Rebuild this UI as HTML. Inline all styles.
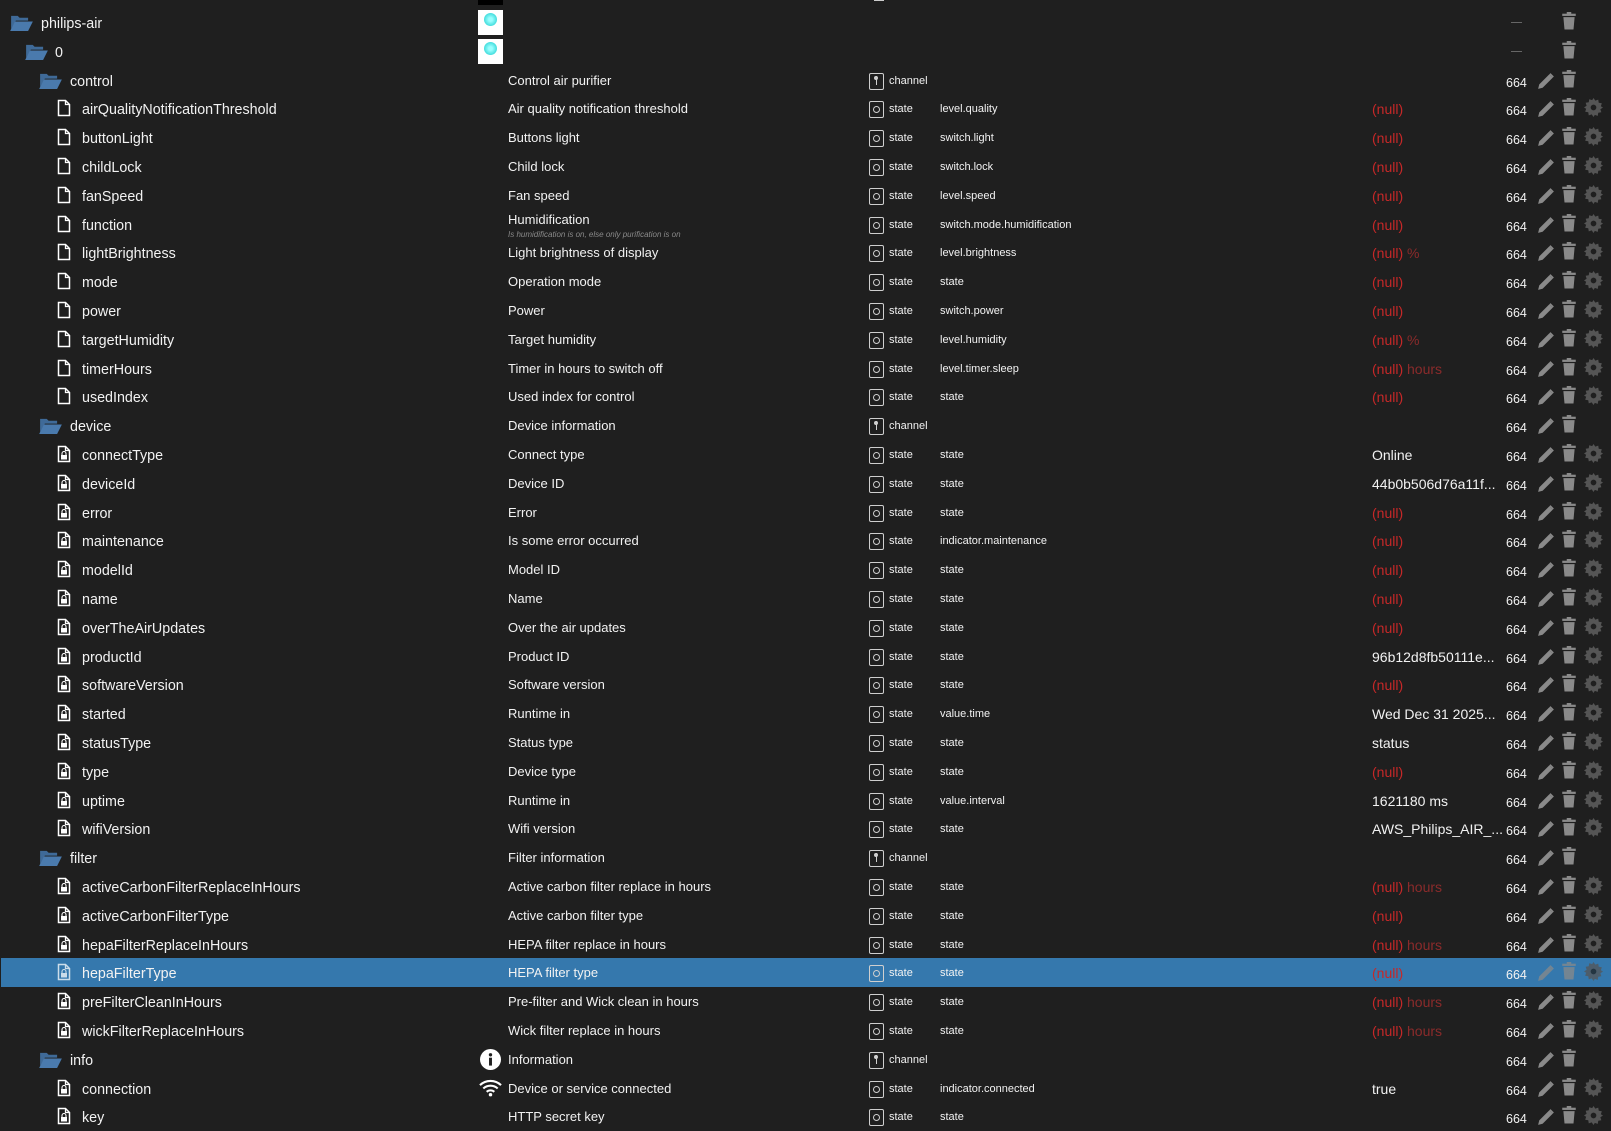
<!DOCTYPE html>
<html><head><meta charset="utf-8"><style>
html,body{margin:0;padding:0;background:#1f1f1f;width:1611px;height:1130px;overflow:hidden;font-family:"Liberation Sans",sans-serif;color:#f2f2f2}
.r{position:absolute;left:0;width:1611px;height:28.8px}
.r>*{position:absolute}
.sel{background:#3578ad;left:1px;width:1610px}
.n{font-size:14.3px;top:8px;white-space:nowrap}
.d{left:508px;font-size:13px;top:7px;white-space:nowrap}
.d2{left:508px;font-size:8px;top:20px;font-style:italic;color:#8a8a8a;white-space:nowrap}
.t{left:889px;font-size:11px;top:9px}
.ro{left:940px;font-size:11px;top:9px;white-space:nowrap}
.v{left:1372px;font-size:14px;top:7px;white-space:nowrap}
.nu{color:#c62828}.un{color:#8b2b2b}
.p{left:1506px;font-size:12.5px;top:10px}
.tb{left:869px;top:7px;width:13px;height:15px;border:1px solid #cfcfcf;border-radius:2px}
.tb.s::after{content:"";position:absolute;left:3px;top:4px;width:5px;height:5px;border:1px solid #cfcfcf;border-radius:50%}
.tb.c::after{content:"";position:absolute;left:6px;top:2px;width:1px;height:9px;background:#cfcfcf}
.tb.c::before{content:"";position:absolute;left:4px;top:2px;width:4px;height:4px;background:#cfcfcf;border-radius:50%}
.ic{position:absolute}
svg.ic[style*="left:1537px"],svg.ic[style*="left:1536px"]{width:18px;height:18px;margin-top:-1px}
svg.ic[style*="left:1563px"],svg.ic[style*="left:1562px"]{width:14px;height:18px;margin-left:-1px;margin-top:-1px}
svg.ic[style*="left:1584px"],svg.ic[style*="left:1583px"]{width:19px;height:19px;margin-top:-1px}
.sel svg.ic{opacity:.75}
</style></head><body>
<svg width="0" height="0" style="position:absolute">
<defs>
<symbol id="fo" viewBox="0 0 24 18"><path d="M1 2h7l2 2h9v3H6L1 16z" fill="#3f6a98"/><path d="M5 8h19l-5 10H0z" fill="#4a7aad"/></symbol>
<symbol id="fi" viewBox="0 0 14 18"><path d="M1.5 1.5h7l4 4v11h-11z" fill="none" stroke="#fff" stroke-width="1.5"/><path d="M8.5 1.5v4h4" fill="none" stroke="#fff" stroke-width="1.3"/></symbol>
<symbol id="fl" viewBox="0 0 14 18"><path d="M1.5 1.5h7l4 4v11h-11z" fill="none" stroke="#fff" stroke-width="1.5"/><path d="M8.5 1.5v4h4" fill="none" stroke="#fff" stroke-width="1.3"/><rect x="4" y="10" width="6" height="4.5" fill="#fff"/><path d="M5 10V8.5a2 2 0 0 1 4 0V10" fill="none" stroke="#fff" stroke-width="1.1"/></symbol>
<symbol id="pe" viewBox="0 0 16 16"><path d="M1 15l1-4 9-9 3 3-9 9z" fill="#8a8a8a"/><path d="M12 1l3 3-1 1-3-3z" fill="#8a8a8a"/></symbol>
<symbol id="tr" viewBox="0 0 12 16"><rect x="0" y="1.5" width="12" height="2" fill="#8a8a8a"/><rect x="4" y="0" width="4" height="2" fill="#8a8a8a"/><path d="M1 4.5h10l-1 11H2z" fill="#8a8a8a"/></symbol>
<symbol id="ge" viewBox="0 0 16 16"><path d="M8 0l1.5 2.2 2.5-.8.4 2.6 2.6.4-.8 2.5L16 8l-2.2 1.5.8 2.5-2.6.4-.4 2.6-2.5-.8L8 16l-1.5-2.2-2.5.8-.4-2.6-2.6-.4.8-2.5L0 8l2.2-1.5-.8-2.5 2.6-.4.4-2.6 2.5.8z" fill="#555"/><circle cx="8" cy="8" r="2.4" fill="#1f1f1f"/></symbol>
</defs></svg>
<div style="position:absolute;left:478px;top:0;width:25px;height:5px;background:#000"></div>
<div style="position:absolute;left:874px;top:0;width:10px;height:1px;background:#ccc"></div>

<div class="r" style="top:8px"><svg class="ic" style="left:10px;top:6px" width="23" height="17"><use href="#fo"/></svg><span class="n" style="left:41px">philips-air</span><div style="left:478px;top:2px;width:25px;height:25px;background:#fff"><div style="position:absolute;left:6px;top:3px;width:13px;height:13px;border-radius:50%;background:radial-gradient(#9ff 20%,#4dd 70%,#dff)"></div></div><div style="left:1511px;top:14px;width:11px;height:1px;background:#666"></div><svg class="ic" style="left:1563px;top:5px" width="12" height="16"><use href="#tr"/></svg></div>
<div class="r" style="top:36.8px"><svg class="ic" style="left:25px;top:6px" width="23" height="17"><use href="#fo"/></svg><span class="n" style="left:55px">0</span><div style="left:478px;top:2px;width:25px;height:25px;background:#fff"><div style="position:absolute;left:6px;top:3px;width:13px;height:13px;border-radius:50%;background:radial-gradient(#9ff 20%,#4dd 70%,#dff)"></div></div><div style="left:1511px;top:14px;width:11px;height:1px;background:#666"></div><svg class="ic" style="left:1563px;top:5px" width="12" height="16"><use href="#tr"/></svg></div>

<div class="r" style="top:65.6px"><svg class="ic" style="left:39px;top:6px" width="23" height="17"><use href="#fo"/></svg><span class="n" style="left:70px">control</span><span class="d">Control air purifier</span><i class="tb c"></i><span class="t">channel</span><span class="p">664</span><svg class="ic" style="left:1537px;top:7px" width="16" height="16"><use href="#pe"/></svg><svg class="ic" style="left:1563px;top:5px" width="12" height="16"><use href="#tr"/></svg></div>

<div class="r" style="top:94.4px"><svg class="ic" style="left:57px;top:5px" width="14" height="18"><use href="#fi"/></svg><span class="n" style="left:82px">airQualityNotificationThreshold</span><span class="d">Air quality notification threshold</span><i class="tb s"></i><span class="t">state</span><span class="ro">level.quality</span><span class="v nu">(null)</span><span class="p">664</span><svg class="ic" style="left:1537px;top:7px" width="16" height="16"><use href="#pe"/></svg><svg class="ic" style="left:1563px;top:5px" width="12" height="16"><use href="#tr"/></svg><svg class="ic" style="left:1584px;top:5px" width="16" height="16"><use href="#ge"/></svg></div>
<div class="r" style="top:123.2px"><svg class="ic" style="left:57px;top:5px" width="14" height="18"><use href="#fi"/></svg><span class="n" style="left:82px">buttonLight</span><span class="d">Buttons light</span><i class="tb s"></i><span class="t">state</span><span class="ro">switch.light</span><span class="v nu">(null)</span><span class="p">664</span><svg class="ic" style="left:1537px;top:7px" width="16" height="16"><use href="#pe"/></svg><svg class="ic" style="left:1563px;top:5px" width="12" height="16"><use href="#tr"/></svg><svg class="ic" style="left:1584px;top:5px" width="16" height="16"><use href="#ge"/></svg></div>
<div class="r" style="top:152px"><svg class="ic" style="left:57px;top:5px" width="14" height="18"><use href="#fi"/></svg><span class="n" style="left:82px">childLock</span><span class="d">Child lock</span><i class="tb s"></i><span class="t">state</span><span class="ro">switch.lock</span><span class="v nu">(null)</span><span class="p">664</span><svg class="ic" style="left:1537px;top:7px" width="16" height="16"><use href="#pe"/></svg><svg class="ic" style="left:1563px;top:5px" width="12" height="16"><use href="#tr"/></svg><svg class="ic" style="left:1584px;top:5px" width="16" height="16"><use href="#ge"/></svg></div>
<div class="r" style="top:180.8px"><svg class="ic" style="left:57px;top:5px" width="14" height="18"><use href="#fi"/></svg><span class="n" style="left:82px">fanSpeed</span><span class="d">Fan speed</span><i class="tb s"></i><span class="t">state</span><span class="ro">level.speed</span><span class="v nu">(null)</span><span class="p">664</span><svg class="ic" style="left:1537px;top:7px" width="16" height="16"><use href="#pe"/></svg><svg class="ic" style="left:1563px;top:5px" width="12" height="16"><use href="#tr"/></svg><svg class="ic" style="left:1584px;top:5px" width="16" height="16"><use href="#ge"/></svg></div>
<div class="r" style="top:209.6px"><svg class="ic" style="left:57px;top:5px" width="14" height="18"><use href="#fi"/></svg><span class="n" style="left:82px">function</span><span class="d" style="top:2px">Humidification</span><span class="d2">Is humidification is on, else only purification is on</span><i class="tb s"></i><span class="t">state</span><span class="ro">switch.mode.humidification</span><span class="v nu">(null)</span><span class="p">664</span><svg class="ic" style="left:1537px;top:7px" width="16" height="16"><use href="#pe"/></svg><svg class="ic" style="left:1563px;top:5px" width="12" height="16"><use href="#tr"/></svg><svg class="ic" style="left:1584px;top:5px" width="16" height="16"><use href="#ge"/></svg></div>
<div class="r" style="top:238.4px"><svg class="ic" style="left:57px;top:5px" width="14" height="18"><use href="#fi"/></svg><span class="n" style="left:82px">lightBrightness</span><span class="d">Light brightness of display</span><i class="tb s"></i><span class="t">state</span><span class="ro">level.brightness</span><span class="v"><span class="nu">(null)</span> <span class="un">%</span></span><span class="p">664</span><svg class="ic" style="left:1537px;top:7px" width="16" height="16"><use href="#pe"/></svg><svg class="ic" style="left:1563px;top:5px" width="12" height="16"><use href="#tr"/></svg><svg class="ic" style="left:1584px;top:5px" width="16" height="16"><use href="#ge"/></svg></div>
<div class="r" style="top:267.2px"><svg class="ic" style="left:57px;top:5px" width="14" height="18"><use href="#fi"/></svg><span class="n" style="left:82px">mode</span><span class="d">Operation mode</span><i class="tb s"></i><span class="t">state</span><span class="ro">state</span><span class="v nu">(null)</span><span class="p">664</span><svg class="ic" style="left:1537px;top:7px" width="16" height="16"><use href="#pe"/></svg><svg class="ic" style="left:1563px;top:5px" width="12" height="16"><use href="#tr"/></svg><svg class="ic" style="left:1584px;top:5px" width="16" height="16"><use href="#ge"/></svg></div>
<div class="r" style="top:296px"><svg class="ic" style="left:57px;top:5px" width="14" height="18"><use href="#fi"/></svg><span class="n" style="left:82px">power</span><span class="d">Power</span><i class="tb s"></i><span class="t">state</span><span class="ro">switch.power</span><span class="v nu">(null)</span><span class="p">664</span><svg class="ic" style="left:1537px;top:7px" width="16" height="16"><use href="#pe"/></svg><svg class="ic" style="left:1563px;top:5px" width="12" height="16"><use href="#tr"/></svg><svg class="ic" style="left:1584px;top:5px" width="16" height="16"><use href="#ge"/></svg></div>
<div class="r" style="top:324.8px"><svg class="ic" style="left:57px;top:5px" width="14" height="18"><use href="#fi"/></svg><span class="n" style="left:82px">targetHumidity</span><span class="d">Target humidity</span><i class="tb s"></i><span class="t">state</span><span class="ro">level.humidity</span><span class="v"><span class="nu">(null)</span> <span class="un">%</span></span><span class="p">664</span><svg class="ic" style="left:1537px;top:7px" width="16" height="16"><use href="#pe"/></svg><svg class="ic" style="left:1563px;top:5px" width="12" height="16"><use href="#tr"/></svg><svg class="ic" style="left:1584px;top:5px" width="16" height="16"><use href="#ge"/></svg></div>
<div class="r" style="top:353.6px"><svg class="ic" style="left:57px;top:5px" width="14" height="18"><use href="#fi"/></svg><span class="n" style="left:82px">timerHours</span><span class="d">Timer in hours to switch off</span><i class="tb s"></i><span class="t">state</span><span class="ro">level.timer.sleep</span><span class="v"><span class="nu">(null)</span> <span class="un">hours</span></span><span class="p">664</span><svg class="ic" style="left:1537px;top:7px" width="16" height="16"><use href="#pe"/></svg><svg class="ic" style="left:1563px;top:5px" width="12" height="16"><use href="#tr"/></svg><svg class="ic" style="left:1584px;top:5px" width="16" height="16"><use href="#ge"/></svg></div>
<div class="r" style="top:382.4px"><svg class="ic" style="left:57px;top:5px" width="14" height="18"><use href="#fi"/></svg><span class="n" style="left:82px">usedIndex</span><span class="d">Used index for control</span><i class="tb s"></i><span class="t">state</span><span class="ro">state</span><span class="v nu">(null)</span><span class="p">664</span><svg class="ic" style="left:1537px;top:7px" width="16" height="16"><use href="#pe"/></svg><svg class="ic" style="left:1563px;top:5px" width="12" height="16"><use href="#tr"/></svg><svg class="ic" style="left:1584px;top:5px" width="16" height="16"><use href="#ge"/></svg></div>

<div class="r" style="top:411.2px"><svg class="ic" style="left:39px;top:6px" width="23" height="17"><use href="#fo"/></svg><span class="n" style="left:70px">device</span><span class="d">Device information</span><i class="tb c"></i><span class="t">channel</span><span class="p">664</span><svg class="ic" style="left:1537px;top:7px" width="16" height="16"><use href="#pe"/></svg><svg class="ic" style="left:1563px;top:5px" width="12" height="16"><use href="#tr"/></svg></div>

<div class="r" style="top:440px"><svg class="ic" style="left:57px;top:5px" width="14" height="18"><use href="#fl"/></svg><span class="n" style="left:82px">connectType</span><span class="d">Connect type</span><i class="tb s"></i><span class="t">state</span><span class="ro">state</span><span class="v">Online</span><span class="p">664</span><svg class="ic" style="left:1537px;top:7px" width="16" height="16"><use href="#pe"/></svg><svg class="ic" style="left:1563px;top:5px" width="12" height="16"><use href="#tr"/></svg><svg class="ic" style="left:1584px;top:5px" width="16" height="16"><use href="#ge"/></svg></div>
<div class="r" style="top:468.8px"><svg class="ic" style="left:57px;top:5px" width="14" height="18"><use href="#fl"/></svg><span class="n" style="left:82px">deviceId</span><span class="d">Device ID</span><i class="tb s"></i><span class="t">state</span><span class="ro">state</span><span class="v">44b0b506d76a11f...</span><span class="p">664</span><svg class="ic" style="left:1537px;top:7px" width="16" height="16"><use href="#pe"/></svg><svg class="ic" style="left:1563px;top:5px" width="12" height="16"><use href="#tr"/></svg><svg class="ic" style="left:1584px;top:5px" width="16" height="16"><use href="#ge"/></svg></div>
<div class="r" style="top:497.6px"><svg class="ic" style="left:57px;top:5px" width="14" height="18"><use href="#fl"/></svg><span class="n" style="left:82px">error</span><span class="d">Error</span><i class="tb s"></i><span class="t">state</span><span class="ro">state</span><span class="v nu">(null)</span><span class="p">664</span><svg class="ic" style="left:1537px;top:7px" width="16" height="16"><use href="#pe"/></svg><svg class="ic" style="left:1563px;top:5px" width="12" height="16"><use href="#tr"/></svg><svg class="ic" style="left:1584px;top:5px" width="16" height="16"><use href="#ge"/></svg></div>
<div class="r" style="top:526.4px"><svg class="ic" style="left:57px;top:5px" width="14" height="18"><use href="#fl"/></svg><span class="n" style="left:82px">maintenance</span><span class="d">Is some error occurred</span><i class="tb s"></i><span class="t">state</span><span class="ro">indicator.maintenance</span><span class="v nu">(null)</span><span class="p">664</span><svg class="ic" style="left:1537px;top:7px" width="16" height="16"><use href="#pe"/></svg><svg class="ic" style="left:1563px;top:5px" width="12" height="16"><use href="#tr"/></svg><svg class="ic" style="left:1584px;top:5px" width="16" height="16"><use href="#ge"/></svg></div>
<div class="r" style="top:555.2px"><svg class="ic" style="left:57px;top:5px" width="14" height="18"><use href="#fl"/></svg><span class="n" style="left:82px">modelId</span><span class="d">Model ID</span><i class="tb s"></i><span class="t">state</span><span class="ro">state</span><span class="v nu">(null)</span><span class="p">664</span><svg class="ic" style="left:1537px;top:7px" width="16" height="16"><use href="#pe"/></svg><svg class="ic" style="left:1563px;top:5px" width="12" height="16"><use href="#tr"/></svg><svg class="ic" style="left:1584px;top:5px" width="16" height="16"><use href="#ge"/></svg></div>
<div class="r" style="top:584px"><svg class="ic" style="left:57px;top:5px" width="14" height="18"><use href="#fl"/></svg><span class="n" style="left:82px">name</span><span class="d">Name</span><i class="tb s"></i><span class="t">state</span><span class="ro">state</span><span class="v nu">(null)</span><span class="p">664</span><svg class="ic" style="left:1537px;top:7px" width="16" height="16"><use href="#pe"/></svg><svg class="ic" style="left:1563px;top:5px" width="12" height="16"><use href="#tr"/></svg><svg class="ic" style="left:1584px;top:5px" width="16" height="16"><use href="#ge"/></svg></div>
<div class="r" style="top:612.8px"><svg class="ic" style="left:57px;top:5px" width="14" height="18"><use href="#fl"/></svg><span class="n" style="left:82px">overTheAirUpdates</span><span class="d">Over the air updates</span><i class="tb s"></i><span class="t">state</span><span class="ro">state</span><span class="v nu">(null)</span><span class="p">664</span><svg class="ic" style="left:1537px;top:7px" width="16" height="16"><use href="#pe"/></svg><svg class="ic" style="left:1563px;top:5px" width="12" height="16"><use href="#tr"/></svg><svg class="ic" style="left:1584px;top:5px" width="16" height="16"><use href="#ge"/></svg></div>
<div class="r" style="top:641.6px"><svg class="ic" style="left:57px;top:5px" width="14" height="18"><use href="#fl"/></svg><span class="n" style="left:82px">productId</span><span class="d">Product ID</span><i class="tb s"></i><span class="t">state</span><span class="ro">state</span><span class="v">96b12d8fb50111e...</span><span class="p">664</span><svg class="ic" style="left:1537px;top:7px" width="16" height="16"><use href="#pe"/></svg><svg class="ic" style="left:1563px;top:5px" width="12" height="16"><use href="#tr"/></svg><svg class="ic" style="left:1584px;top:5px" width="16" height="16"><use href="#ge"/></svg></div>
<div class="r" style="top:670.4px"><svg class="ic" style="left:57px;top:5px" width="14" height="18"><use href="#fl"/></svg><span class="n" style="left:82px">softwareVersion</span><span class="d">Software version</span><i class="tb s"></i><span class="t">state</span><span class="ro">state</span><span class="v nu">(null)</span><span class="p">664</span><svg class="ic" style="left:1537px;top:7px" width="16" height="16"><use href="#pe"/></svg><svg class="ic" style="left:1563px;top:5px" width="12" height="16"><use href="#tr"/></svg><svg class="ic" style="left:1584px;top:5px" width="16" height="16"><use href="#ge"/></svg></div>
<div class="r" style="top:699.2px"><svg class="ic" style="left:57px;top:5px" width="14" height="18"><use href="#fl"/></svg><span class="n" style="left:82px">started</span><span class="d">Runtime in</span><i class="tb s"></i><span class="t">state</span><span class="ro">value.time</span><span class="v">Wed Dec 31 2025...</span><span class="p">664</span><svg class="ic" style="left:1537px;top:7px" width="16" height="16"><use href="#pe"/></svg><svg class="ic" style="left:1563px;top:5px" width="12" height="16"><use href="#tr"/></svg><svg class="ic" style="left:1584px;top:5px" width="16" height="16"><use href="#ge"/></svg></div>
<div class="r" style="top:728px"><svg class="ic" style="left:57px;top:5px" width="14" height="18"><use href="#fl"/></svg><span class="n" style="left:82px">statusType</span><span class="d">Status type</span><i class="tb s"></i><span class="t">state</span><span class="ro">state</span><span class="v">status</span><span class="p">664</span><svg class="ic" style="left:1537px;top:7px" width="16" height="16"><use href="#pe"/></svg><svg class="ic" style="left:1563px;top:5px" width="12" height="16"><use href="#tr"/></svg><svg class="ic" style="left:1584px;top:5px" width="16" height="16"><use href="#ge"/></svg></div>
<div class="r" style="top:756.8px"><svg class="ic" style="left:57px;top:5px" width="14" height="18"><use href="#fl"/></svg><span class="n" style="left:82px">type</span><span class="d">Device type</span><i class="tb s"></i><span class="t">state</span><span class="ro">state</span><span class="v nu">(null)</span><span class="p">664</span><svg class="ic" style="left:1537px;top:7px" width="16" height="16"><use href="#pe"/></svg><svg class="ic" style="left:1563px;top:5px" width="12" height="16"><use href="#tr"/></svg><svg class="ic" style="left:1584px;top:5px" width="16" height="16"><use href="#ge"/></svg></div>
<div class="r" style="top:785.6px"><svg class="ic" style="left:57px;top:5px" width="14" height="18"><use href="#fl"/></svg><span class="n" style="left:82px">uptime</span><span class="d">Runtime in</span><i class="tb s"></i><span class="t">state</span><span class="ro">value.interval</span><span class="v">1621180 ms</span><span class="p">664</span><svg class="ic" style="left:1537px;top:7px" width="16" height="16"><use href="#pe"/></svg><svg class="ic" style="left:1563px;top:5px" width="12" height="16"><use href="#tr"/></svg><svg class="ic" style="left:1584px;top:5px" width="16" height="16"><use href="#ge"/></svg></div>
<div class="r" style="top:814.4px"><svg class="ic" style="left:57px;top:5px" width="14" height="18"><use href="#fl"/></svg><span class="n" style="left:82px">wifiVersion</span><span class="d">Wifi version</span><i class="tb s"></i><span class="t">state</span><span class="ro">state</span><span class="v">AWS_Philips_AIR_...</span><span class="p">664</span><svg class="ic" style="left:1537px;top:7px" width="16" height="16"><use href="#pe"/></svg><svg class="ic" style="left:1563px;top:5px" width="12" height="16"><use href="#tr"/></svg><svg class="ic" style="left:1584px;top:5px" width="16" height="16"><use href="#ge"/></svg></div>

<div class="r" style="top:843.2px"><svg class="ic" style="left:39px;top:6px" width="23" height="17"><use href="#fo"/></svg><span class="n" style="left:70px">filter</span><span class="d">Filter information</span><i class="tb c"></i><span class="t">channel</span><span class="p">664</span><svg class="ic" style="left:1537px;top:7px" width="16" height="16"><use href="#pe"/></svg><svg class="ic" style="left:1563px;top:5px" width="12" height="16"><use href="#tr"/></svg></div>

<div class="r" style="top:872px"><svg class="ic" style="left:57px;top:5px" width="14" height="18"><use href="#fl"/></svg><span class="n" style="left:82px">activeCarbonFilterReplaceInHours</span><span class="d">Active carbon filter replace in hours</span><i class="tb s"></i><span class="t">state</span><span class="ro">state</span><span class="v"><span class="nu">(null)</span> <span class="un">hours</span></span><span class="p">664</span><svg class="ic" style="left:1537px;top:7px" width="16" height="16"><use href="#pe"/></svg><svg class="ic" style="left:1563px;top:5px" width="12" height="16"><use href="#tr"/></svg><svg class="ic" style="left:1584px;top:5px" width="16" height="16"><use href="#ge"/></svg></div>
<div class="r" style="top:900.8px"><svg class="ic" style="left:57px;top:5px" width="14" height="18"><use href="#fl"/></svg><span class="n" style="left:82px">activeCarbonFilterType</span><span class="d">Active carbon filter type</span><i class="tb s"></i><span class="t">state</span><span class="ro">state</span><span class="v nu">(null)</span><span class="p">664</span><svg class="ic" style="left:1537px;top:7px" width="16" height="16"><use href="#pe"/></svg><svg class="ic" style="left:1563px;top:5px" width="12" height="16"><use href="#tr"/></svg><svg class="ic" style="left:1584px;top:5px" width="16" height="16"><use href="#ge"/></svg></div>
<div class="r" style="top:929.6px"><svg class="ic" style="left:57px;top:5px" width="14" height="18"><use href="#fl"/></svg><span class="n" style="left:82px">hepaFilterReplaceInHours</span><span class="d">HEPA filter replace in hours</span><i class="tb s"></i><span class="t">state</span><span class="ro">state</span><span class="v"><span class="nu">(null)</span> <span class="un">hours</span></span><span class="p">664</span><svg class="ic" style="left:1537px;top:7px" width="16" height="16"><use href="#pe"/></svg><svg class="ic" style="left:1563px;top:5px" width="12" height="16"><use href="#tr"/></svg><svg class="ic" style="left:1584px;top:5px" width="16" height="16"><use href="#ge"/></svg></div>
<div class="r sel" style="top:958.4px"><svg class="ic" style="left:56px;top:5px" width="14" height="18"><use href="#fl"/></svg><span class="n" style="left:81px">hepaFilterType</span><span class="d" style="left:507px">HEPA filter type</span><i class="tb s" style="left:868px"></i><span class="t" style="left:888px">state</span><span class="ro" style="left:939px">state</span><span class="v nu" style="left:1371px">(null)</span><span class="p" style="left:1505px">664</span><svg class="ic" style="left:1536px;top:7px" width="16" height="16"><use href="#pe"/></svg><svg class="ic" style="left:1562px;top:5px" width="12" height="16"><use href="#tr"/></svg><svg class="ic" style="left:1583px;top:5px" width="16" height="16"><use href="#ge"/></svg></div>
<div class="r" style="top:987.2px"><svg class="ic" style="left:57px;top:5px" width="14" height="18"><use href="#fl"/></svg><span class="n" style="left:82px">preFilterCleanInHours</span><span class="d">Pre-filter and Wick clean in hours</span><i class="tb s"></i><span class="t">state</span><span class="ro">state</span><span class="v"><span class="nu">(null)</span> <span class="un">hours</span></span><span class="p">664</span><svg class="ic" style="left:1537px;top:7px" width="16" height="16"><use href="#pe"/></svg><svg class="ic" style="left:1563px;top:5px" width="12" height="16"><use href="#tr"/></svg><svg class="ic" style="left:1584px;top:5px" width="16" height="16"><use href="#ge"/></svg></div>
<div class="r" style="top:1016px"><svg class="ic" style="left:57px;top:5px" width="14" height="18"><use href="#fl"/></svg><span class="n" style="left:82px">wickFilterReplaceInHours</span><span class="d">Wick filter replace in hours</span><i class="tb s"></i><span class="t">state</span><span class="ro">state</span><span class="v"><span class="nu">(null)</span> <span class="un">hours</span></span><span class="p">664</span><svg class="ic" style="left:1537px;top:7px" width="16" height="16"><use href="#pe"/></svg><svg class="ic" style="left:1563px;top:5px" width="12" height="16"><use href="#tr"/></svg><svg class="ic" style="left:1584px;top:5px" width="16" height="16"><use href="#ge"/></svg></div>

<div class="r" style="top:1044.8px"><svg class="ic" style="left:39px;top:6px" width="23" height="17"><use href="#fo"/></svg><span class="n" style="left:70px">info</span><svg class="ic" style="left:480px;top:4px" width="21" height="21" viewBox="0 0 20 20"><circle cx="10" cy="10" r="10" fill="#fff"/><circle cx="10" cy="5.5" r="1.6" fill="#1f1f1f"/><rect x="8.6" y="8.3" width="2.8" height="7.5" fill="#1f1f1f"/></svg><span class="d">Information</span><i class="tb c"></i><span class="t">channel</span><span class="p">664</span><svg class="ic" style="left:1537px;top:7px" width="16" height="16"><use href="#pe"/></svg><svg class="ic" style="left:1563px;top:5px" width="12" height="16"><use href="#tr"/></svg></div>
<div class="r" style="top:1073.6px"><svg class="ic" style="left:57px;top:5px" width="14" height="18"><use href="#fl"/></svg><span class="n" style="left:82px">connection</span><svg class="ic" style="left:479px;top:5px" width="23" height="18" viewBox="0 0 24 18"><path d="M1 6a16 16 0 0 1 22 0M4.5 9.5a11 11 0 0 1 15 0M8 13a6 6 0 0 1 8 0" fill="none" stroke="#fff" stroke-width="2.2"/><circle cx="12" cy="16" r="1.8" fill="#fff"/></svg><span class="d">Device or service connected</span><i class="tb s"></i><span class="t">state</span><span class="ro">indicator.connected</span><span class="v">true</span><span class="p">664</span><svg class="ic" style="left:1537px;top:7px" width="16" height="16"><use href="#pe"/></svg><svg class="ic" style="left:1563px;top:5px" width="12" height="16"><use href="#tr"/></svg><svg class="ic" style="left:1584px;top:5px" width="16" height="16"><use href="#ge"/></svg></div>
<div class="r" style="top:1102.4px"><svg class="ic" style="left:57px;top:5px" width="14" height="18"><use href="#fl"/></svg><span class="n" style="left:82px">key</span><span class="d">HTTP secret key</span><i class="tb s"></i><span class="t">state</span><span class="ro">state</span><span class="p">664</span><svg class="ic" style="left:1537px;top:7px" width="16" height="16"><use href="#pe"/></svg><svg class="ic" style="left:1563px;top:5px" width="12" height="16"><use href="#tr"/></svg><svg class="ic" style="left:1584px;top:5px" width="16" height="16"><use href="#ge"/></svg></div>
</body></html>
